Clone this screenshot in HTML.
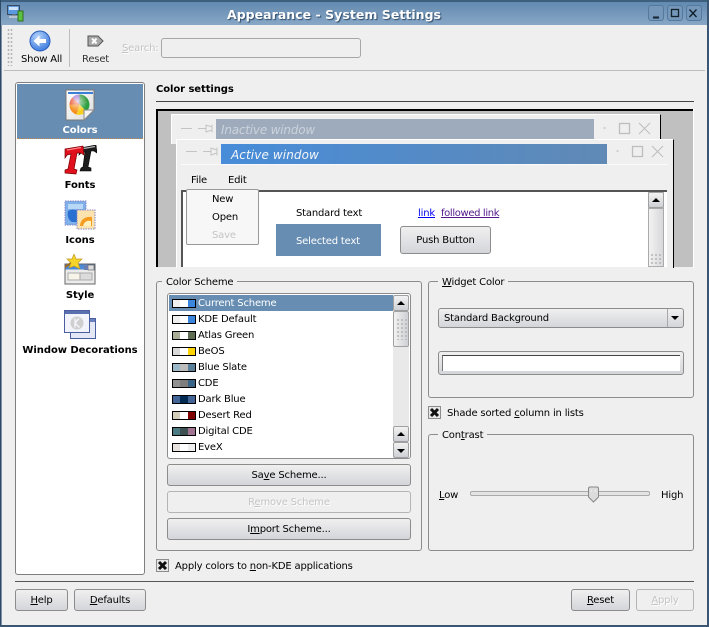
<!DOCTYPE html>
<html><head><meta charset="utf-8"><style>
html,body{margin:0;padding:0}
body{width:709px;height:627px;overflow:hidden;position:relative;background:#efefef;font-family:"DejaVu Sans",sans-serif;font-size:10px;color:#000;letter-spacing:-.18px}
.a,.t{position:absolute}
.t{white-space:nowrap;line-height:12px}
.b{font-weight:bold;letter-spacing:-.08px}
u{text-underline-offset:1px}
.btn{position:absolute;box-sizing:border-box;border:1px solid #8c8c8c;border-radius:3px;background:linear-gradient(#f0f0f0,#d4d5da);text-align:center;line-height:22px;white-space:nowrap}
.dis{background:#efefef;border-color:#b4b4b4;color:#c4c4c4;text-shadow:1px 1px 0 #fff}
.gb{position:absolute;box-sizing:border-box;border:1px solid #8c8c8c;border-radius:3px}
.lbl{position:absolute;background:#efefef;padding:0 4px;line-height:12px;white-space:nowrap}
.sb{position:absolute;box-sizing:border-box;width:16px;height:16px;border:1px solid #a0a0a0;border-radius:2px;background:linear-gradient(#f2f2f2,#cfd0d5)}
.sw{position:absolute;left:172px;width:24px;height:9px;box-sizing:border-box;border:1px solid #000;display:flex}
.sw i{flex:1;display:block}
.row{position:absolute;left:198px;line-height:12px;white-space:nowrap}
.up:after,.dn:after{content:"";position:absolute;left:3px;border-left:4px solid transparent;border-right:4px solid transparent}
.up:after{top:5px;border-bottom:4px solid #000}
.dn:after{top:6px;border-top:4px solid #000}
.grip{position:absolute;background-image:radial-gradient(circle,#b4b4b4 0.8px,transparent 1px);background-size:4px 4px}
.cb{position:absolute;width:13px;height:13px;box-sizing:border-box;border:1px solid #8c8c8c;background:#e8e8e8}
.wb{position:absolute;top:5px;width:16px;height:16px;box-sizing:border-box;border:1px solid #55799c;border-radius:3px;background:#7497ba}
</style></head><body>

<!-- window frame -->
<div class="a" style="left:0;top:0;width:709px;height:25px;background:linear-gradient(#5f87ae,#88a7c6)"></div>
<div class="a" style="left:0;top:0;width:709px;height:2px;background:#3f5f7f"></div>
<div class="a" style="left:0;top:0;width:1px;height:627px;background:#2f4a64"></div>
<div class="a" style="left:1px;top:25px;width:1px;height:602px;background:#7d92a8"></div>
<div class="a" style="left:707px;top:0;width:2px;height:627px;background:#3a5672"></div>
<div class="a" style="left:0;top:625px;width:709px;height:2px;background:#3a5672"></div>

<!-- title icon -->
<svg class="a" style="left:6px;top:4px" width="18" height="18" viewBox="0 0 18 18">
<rect x="1.5" y="1.5" width="12" height="9" fill="#5a9be0" stroke="#3a4a60"/><rect x="3" y="3" width="9" height="3" fill="#cfe4fa"/>
<rect x="6" y="10.5" width="4" height="2" fill="#8090a0"/><rect x="3" y="12" width="10" height="2" fill="#b8c4d0"/>
<rect x="12" y="7" width="5" height="10" fill="#5cc040" stroke="#2f6f20"/>
</svg>
<div class="t b" style="left:227px;top:7px;font-size:12.5px;line-height:15px;color:#fff;text-shadow:1px 1px 1px #2e4a66;letter-spacing:.03px">Appearance - System Settings</div>

<!-- window buttons -->
<div class="wb" style="left:648px"></div>
<div class="wb" style="left:667px"></div>
<div class="wb" style="left:686px"></div>
<svg class="a" style="left:648px;top:5px" width="54" height="18" viewBox="0 0 54 18" fill="none" stroke="#14222e">
<path d="M5 12.500H11" stroke-width="2"/><rect x="23.500" y="4.500" width="7" height="7" stroke-width="1.300"/><path d="M41.500 4.500L48.500 12M48.500 4.500L41.500 12" stroke-width="1.400"/>
</svg>

<!-- toolbar -->
<div class="grip" style="left:7px;top:28px;width:6px;height:38px;background-size:3px 4px;"></div>
<svg class="a" style="left:29px;top:30px" width="22" height="22" viewBox="0 0 22 22">
<defs><radialGradient id="g1" cx=".4" cy=".3" r=".8"><stop offset="0" stop-color="#b7d6fb"/><stop offset="1" stop-color="#2f6fdc"/></radialGradient></defs>
<circle cx="11" cy="11" r="10" fill="url(#g1)" stroke="#2a5bb8"/>
<path d="M4.500 11L10.500 5.500V9H17V13H10.500V16.500z" fill="#fff"/>
</svg>
<div class="t" style="left:21px;top:54px">Show All</div>
<div class="a" style="left:69px;top:29px;width:1px;height:38px;background:#bdbdbd"></div>
<svg class="a" style="left:87px;top:35px" width="17" height="12" viewBox="0 0 17 12">
<path d="M1 1H11L16 6L11 11H1Z" fill="#a8a8a8" stroke="#555"/><path d="M5 3.500L9.500 8.500M9.500 3.500L5 8.500" stroke="#fff" stroke-width="2"/>
</svg>
<div class="t" style="left:82px;top:54px;color:#333">Reset</div>
<div class="t" style="left:122px;top:43px;color:#c2c2c2;text-shadow:1px 1px 0 #fff"><u>S</u>earch:</div>
<div class="a" style="left:161px;top:38px;width:200px;height:20px;box-sizing:border-box;border:1px solid #a6a6a6;border-radius:3px;background:#efefef"></div>
<div class="a" style="left:4px;top:70px;width:701px;height:1px;background:#bdbdbd"></div>

<!-- sidebar -->
<div class="a" style="left:15px;top:82px;width:130px;height:493px;box-sizing:border-box;border:1px solid #7f7f7f;border-radius:3px;background:#fff"></div>
<div class="a" style="left:17px;top:84px;width:126px;height:54px;background:#678db2;border-bottom:1px dotted #c28a4a"></div>
<svg class="a" style="left:65px;top:89px" width="30" height="33" viewBox="0 0 30 33">
<defs><linearGradient id="pg" x1="0" y1="0" x2="1" y2="1"><stop offset="0" stop-color="#fff"/><stop offset="1" stop-color="#dcdcdc"/></linearGradient>
<radialGradient id="hl" cx=".4" cy=".35" r=".5"><stop offset="0" stop-color="#fff" stop-opacity=".75"/><stop offset="1" stop-color="#fff" stop-opacity="0"/></radialGradient></defs>
<path d="M1 1H29V21L19 31H1Z" fill="url(#pg)" stroke="#777"/><rect x="3" y="3" width="25" height="2" fill="#3a7fd8"/>
<g transform="translate(-.5,-1.500)">
<path d="M15 17L15 7A10 10 0 0 1 24.500 14Z" fill="#2f9a3a"/><path d="M15 17L24.500 14A10 10 0 0 1 22 24Z" fill="#2fa040"/>
<path d="M15 17L22 24A10 10 0 0 1 12 27Z" fill="#f6d020"/><path d="M15 17L12 27A10 10 0 0 1 5 17Z" fill="#f59020"/>
<path d="M15 17L5 17A10 10 0 0 1 8 10Z" fill="#e8502a"/><path d="M15 17L8 10A10 10 0 0 1 15 7Z" fill="#a070d0"/>
<circle cx="15" cy="17" r="10" fill="url(#hl)"/></g>
<path d="M19 31V21H29Z" fill="#f4f4f4" stroke="#888"/>
</svg>
<div class="t b" style="left:17px;top:125px;width:126px;text-align:center;color:#fff">Colors</div>

<svg class="a" style="left:63px;top:145px" width="34" height="30" viewBox="0 0 34 30">
<path d="M17 3L33 0L34 8L31 6L28 6L25 22L28 23V26L17 26L18 23L20 22L22 7L18 8L16 10Z" fill="#1c1c1c" stroke="#000" stroke-width=".6"/>
<path d="M18 4L32 1.500" stroke="#b8b8b8" stroke-width="1.200"/>
<path d="M2 4L20 1L21 10L18 8L14 8L11 24L14 25L13 29L2 28L2 25L5 24L8 9L4 10L2 13Z" fill="#e0101c" stroke="#700" stroke-width=".7"/>
<path d="M4 5L18 2.500" stroke="#ff8088" stroke-width="1.200"/>
</svg>
<div class="t b" style="left:17px;top:180px;width:126px;text-align:center">Fonts</div>

<svg class="a" style="left:64px;top:200px" width="32" height="30" viewBox="0 0 32 30">
<rect x="1" y="1" width="21" height="24" fill="#7fb0ea" stroke="#8a86c4" stroke-dasharray="1.500 1"/>
<rect x="4" y="4" width="15" height="5" fill="#b9d8f6"/><path d="M4 11C9 8 15 10 17 15L15 22H8C4 20 3 15 4 11Z" fill="#2a70d0"/>
<rect x="13" y="10" width="18" height="19" fill="#fbe3b0" stroke="#8a86c4" stroke-dasharray="1.500 1"/>
<path d="M16 26C16 20 21 16 28 17V26Z" fill="#f59c20"/><path d="M19 26C20 22 23 20 27 21V26Z" fill="#fff0c0"/>
</svg>
<div class="t b" style="left:17px;top:235px;width:126px;text-align:center">Icons</div>

<svg class="a" style="left:64px;top:254px" width="32" height="31" viewBox="0 0 32 31">
<rect x="1" y="10" width="30" height="20" fill="#ececec" stroke="#666"/><rect x="1.500" y="10.500" width="29" height="5" fill="#4a8ad8"/>
<rect x="24" y="11" width="6" height="5" fill="#ddd" stroke="#555" stroke-width=".6"/><rect x="20" y="11" width="4" height="5" fill="#6a7fb0"/>
<rect x="4" y="19" width="24" height="7" fill="#f8f4ea" stroke="#aaa"/><rect x="16" y="19" width="12" height="7" fill="#dcdcdc" stroke="#aaa"/>
<path d="M1 13L7 9" stroke="#a06a20" stroke-width="2"/>
<path d="M10 0L12 5L18 5L14 9L16 15L10 12L5 14L7 9L3 5L8 5Z" fill="#f6d52a" stroke="#c09a20" stroke-width=".7"/>
</svg>
<div class="t b" style="left:17px;top:290px;width:126px;text-align:center">Style</div>

<svg class="a" style="left:64px;top:310px" width="33" height="30" viewBox="0 0 33 30">
<rect x="6.500" y="8.500" width="25" height="20" fill="#e4e8f6" stroke="#4a5fa0"/><rect x="7" y="9" width="24" height="3" fill="#6a7fc0"/>
<rect x=".5" y=".5" width="25" height="22" fill="#f2f3fb" stroke="#4a5fa0"/><rect x="1" y="1" width="24" height="3" fill="#5a6fb0"/>
<circle cx="13" cy="13" r="6.500" fill="#cfcfcf"/><path d="M11 8.500V17.500M11 13L15 8.500M11 13L15.500 17.500" stroke="#f2f3fb" stroke-width="1.500" fill="none"/>
</svg>
<div class="t b" style="left:17px;top:345px;width:126px;text-align:center;letter-spacing:-.05px">Window Decorations</div>

<!-- header -->
<div class="t b" style="left:156px;top:84px">Color settings</div>
<div class="a" style="left:156px;top:101px;width:538px;height:1px;background:#444"></div>

<!-- preview -->
<div class="a" style="left:156px;top:109px;width:538px;height:159px;background:#c0c0c0;overflow:hidden;">
  <div class="a" style="left:0;top:0;width:538px;height:2px;background:#000"></div>
  <div class="a" style="left:0;top:0;width:2px;height:159px;background:#000"></div>
  <div class="a" style="right:0;top:0;width:1px;height:159px;background:#fff"></div>
</div>
<div class="a" style="left:156px;top:267px;width:537px;height:1px;background:#efefef"></div>
<!-- inactive window -->
<div class="a" style="left:171px;top:114px;width:490px;height:30px;background:#efefef;border-top:1px solid #fff;border-left:1px solid #fff;border-right:1px solid #000;box-sizing:border-box"></div>
<div class="a" style="left:216px;top:119px;width:378px;height:20px;background:#9dabbc"></div>
<div class="t" style="left:221px;top:123px;font-size:12px;line-height:15px;font-style:italic;color:#ccd3dc;letter-spacing:-.2px">Inactive window</div>
<svg class="a" style="left:180px;top:122px" width="36" height="14" fill="none" stroke="#c4c4c4"><path d="M1 6.500H12M18 6.500H26M26 2.500V10.500M26 3L32 5V8L26 10M32 2.500V10.500"/></svg>
<svg class="a" style="left:602px;top:122px" width="50" height="14" fill="none" stroke="#bdbdbd"><path d="M2 5.500h1v1h-1z" stroke="#d0d0d0"/><rect x="17.500" y="1.500" width="10" height="10" stroke-width="1.300"/><path d="M37 1L48 12M48 1L37 12"/></svg>
<!-- active window -->
<div class="a" style="left:176px;top:139px;width:498px;height:129px;box-sizing:border-box;background:#efefef;border-top:1px solid #fff;border-left:1px solid #fff;border-right:1px solid #000"></div>
<div class="a" style="left:221px;top:144px;width:386px;height:20px;background:linear-gradient(90deg,#478cd9,#6089b5)"></div>
<div class="t" style="left:231px;top:148px;font-size:12px;line-height:15px;font-style:italic;color:#f4f6fa;letter-spacing:.1px">Active window</div>
<svg class="a" style="left:185px;top:145px" width="36" height="14" fill="none" stroke="#c4c4c4"><path d="M1 6.500H12M18 6.500H26M26 2.500V10.500M26 3L32 5V8L26 10M32 2.500V10.500"/></svg>
<svg class="a" style="left:615px;top:145px" width="50" height="14" fill="none" stroke="#bdbdbd"><path d="M2 5.500h1v1h-1z" stroke="#d0d0d0"/><rect x="17.500" y="1.500" width="10" height="10" stroke-width="1.300"/><path d="M37 1L48 12M48 1L37 12"/></svg>
<div class="a" style="left:181px;top:164px;width:487px;height:1px;background:#fafafa"></div>
<div class="t" style="left:191px;top:175px">File</div>
<div class="t" style="left:228px;top:175px">Edit</div>
<!-- client area -->
<div class="a" style="left:181px;top:190px;width:486px;height:77px;box-sizing:border-box;background:#fff;border-top:2px solid #555;border-left:2px solid #555"></div>
<div class="a" style="left:648px;top:192px;width:16px;height:75px;background:#ececec;border-left:1px solid #bbb;border-right:1px solid #bbb;box-sizing:border-box"></div>
<div class="sb up" style="left:648px;top:192px"></div>
<div class="a" style="left:648px;top:208px;width:16px;height:59px;box-sizing:border-box;border:1px solid #aaa;background:linear-gradient(90deg,#f2f2f2,#d8d8dc)"></div>
<div class="grip" style="left:650px;top:253px;width:12px;height:14px"></div>
<!-- menu popup -->
<div class="a" style="left:186px;top:189px;width:73px;height:56px;box-sizing:border-box;border:1px solid #999;border-radius:2px;background:#f7f7f7"></div>
<div class="t" style="left:212px;top:194px">New</div>
<div class="t" style="left:212px;top:212px">Open</div>
<div class="t" style="left:212px;top:230px;color:#c4c4c4">Save</div>
<div class="t" style="left:296px;top:208px">Standard text</div>
<div class="a" style="left:276px;top:224px;width:105px;height:32px;background:#678db2"></div>
<div class="t" style="left:296px;top:236px;color:#fff">Selected text</div>
<div class="t" style="left:418px;top:208px;color:#0000ee;text-decoration:underline">link</div>
<div class="t" style="left:441px;top:208px;color:#52188b;text-decoration:underline;letter-spacing:-.36px">followed link</div>
<div class="btn" style="left:400px;top:226px;width:91px;height:28px;line-height:27px">Push Button</div>

<!-- color scheme group -->
<div class="gb" style="left:156px;top:281px;width:266px;height:270px"></div>
<div class="lbl" style="left:162px;top:277px">Color Scheme</div>
<div class="a" style="left:167px;top:293px;width:244px;height:166px;box-sizing:border-box;border:1px solid #8c8c8c;border-radius:3px;background:#fff"></div>
<div class="a" style="left:169px;top:295px;width:224px;height:16px;background:#678db2"></div>
<div class="a" style="left:393px;top:311px;width:16px;height:115px;background-color:#f4f4f4;background-image:radial-gradient(circle,#ccc .5px,transparent .8px);background-size:2px 2px"></div>
<div class="sb up" style="left:393px;top:295px"></div>
<div class="a" style="left:393px;top:311px;width:16px;height:36px;box-sizing:border-box;border:1px solid #a0a0a0;border-radius:2px;background:linear-gradient(90deg,#f2f2f2,#cfd0d5)"></div>
<div class="grip" style="left:396px;top:318px;width:12px;height:22px"></div>
<div class="sb up" style="left:393px;top:426px"></div>
<div class="sb dn" style="left:393px;top:442px"></div>

<div class="sw" style="top:299px"><i style="background:#efefef"></i><i style="background:#fff"></i><i style="background:#3a86dc"></i></div>
<div class="row" style="top:298px;color:#fff">Current Scheme</div>
<div class="sw" style="top:315px"><i style="background:#efefef"></i><i style="background:#fff"></i><i style="background:#3a86dc"></i></div>
<div class="row" style="top:314px">KDE Default</div>
<div class="sw" style="top:331px"><i style="background:#a8ad98"></i><i style="background:#fff"></i><i style="background:#5f6d55"></i></div>
<div class="row" style="top:330px">Atlas Green</div>
<div class="sw" style="top:347px"><i style="background:#d8d8d8"></i><i style="background:#fff"></i><i style="background:#ffd400"></i></div>
<div class="row" style="top:346px">BeOS</div>
<div class="sw" style="top:363px"><i style="background:#9ab8c8"></i><i style="background:#bcbcbc"></i><i style="background:#5a7f98"></i></div>
<div class="row" style="top:362px">Blue Slate</div>
<div class="sw" style="top:379px"><i style="background:#909090"></i><i style="background:#7e7e7e"></i><i style="background:#3a6486"></i></div>
<div class="row" style="top:378px">CDE</div>
<div class="sw" style="top:395px"><i style="background:#426496"></i><i style="background:#002a52"></i><i style="background:#426496"></i></div>
<div class="row" style="top:394px">Dark Blue</div>
<div class="sw" style="top:411px"><i style="background:#d5cdbc"></i><i style="background:#fff"></i><i style="background:#800000"></i></div>
<div class="row" style="top:410px">Desert Red</div>
<div class="sw" style="top:427px"><i style="background:#4b7a82"></i><i style="background:#3e5152"></i><i style="background:#a27492"></i></div>
<div class="row" style="top:426px">Digital CDE</div>
<div class="sw" style="top:443px"><i style="background:#e6e2e0"></i><i style="background:#fff"></i><i style="background:#eee"></i></div>
<div class="row" style="top:442px">EveX</div>

<div class="btn" style="left:167px;top:464px;width:244px;height:22px">Sa<u>v</u>e Scheme...</div>
<div class="btn dis" style="left:167px;top:491px;width:244px;height:22px">R<u>e</u>move Scheme</div>
<div class="btn" style="left:167px;top:518px;width:244px;height:22px">I<u>m</u>port Scheme...</div>

<!-- checkbox -->
<div class="cb" style="left:156px;top:559px"></div>
<svg class="a" style="left:156px;top:559px" width="13" height="13"><path d="M3 3L10 10M10 3L3 10" stroke="#111" stroke-width="3"/></svg>
<div class="t" style="left:175px;top:561px">Apply colors to <u>n</u>on-KDE applications</div>

<!-- widget color -->
<div class="gb" style="left:428px;top:281px;width:266px;height:117px"></div>
<div class="lbl" style="left:438px;top:277px"><u>W</u>idget Color</div>
<div class="btn" style="left:438px;top:308px;width:246px;height:20px;text-align:left;padding-left:5px;line-height:19px">Standard Background</div>
<div class="a" style="left:667px;top:309px;width:1px;height:18px;background:#a8a8a8"></div>
<div class="a" style="left:671px;top:316px;border-left:4px solid transparent;border-right:4px solid transparent;border-top:4px solid #000"></div>
<div class="btn" style="left:438px;top:351px;width:246px;height:24px"></div>
<div class="a" style="left:442px;top:355px;width:238px;height:16px;box-sizing:border-box;background:#fff;border-top:1px solid #444;border-left:1px solid #777"></div>

<div class="cb" style="left:428px;top:406px"></div>
<svg class="a" style="left:428px;top:406px" width="13" height="13"><path d="M3 3L10 10M10 3L3 10" stroke="#111" stroke-width="3"/></svg>
<div class="t" style="left:447px;top:408px">Shade sorted <u>c</u>olumn in lists</div>

<!-- contrast -->
<div class="gb" style="left:428px;top:434px;width:266px;height:117px"></div>
<div class="lbl" style="left:438px;top:430px">Con<u>t</u>rast</div>
<div class="t" style="left:439px;top:490px"><u>L</u>ow</div>
<div class="a" style="left:470px;top:491px;width:180px;height:5px;box-sizing:border-box;border:1px solid #aaa;border-radius:2px;background:#e4e4e4"></div>
<svg class="a" style="left:587px;top:486px" width="13" height="17" viewBox="0 0 13 17"><path d="M1.500 2.500Q1.500 1 3 1H10Q11.500 1 11.500 2.500V11L6.500 16L1.500 11Z" fill="#dcdcdc" stroke="#888"/><path d="M4 5h1M8 5h1" stroke="#fff"/></svg>
<div class="t" style="left:661px;top:490px">High</div>

<!-- bottom -->
<div class="a" style="left:15px;top:581px;width:679px;height:1px;background:#555"></div>
<div class="btn" style="left:15px;top:589px;width:53px;height:22px"><u>H</u>elp</div>
<div class="btn" style="left:74px;top:589px;width:72px;height:22px"><u>D</u>efaults</div>
<div class="btn" style="left:571px;top:589px;width:59px;height:22px"><u>R</u>eset</div>
<div class="btn dis" style="left:636px;top:589px;width:58px;height:22px"><u>A</u>pply</div>
</body></html>
